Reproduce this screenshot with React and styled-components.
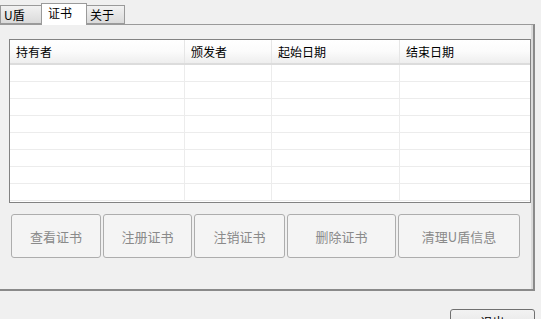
import React from "react";
import styled, { createGlobalStyle } from "styled-components";

const GlobalStyle = createGlobalStyle`
  html, body {
    margin: 0;
    padding: 0;
    background: #f0f0f0;
  }
  body {
    font-family: "Noto Sans CJK SC", "Liberation Sans", sans-serif;
    font-size: 12px;
  }
`;

const Window = styled.div`
  width: 541px;
  height: 319px;
  background: #f0f0f0;
  overflow: hidden;
  position: relative;
`;

const TabBar = styled.div`
  display: flex;
  align-items: flex-end;
  height: 24px;
`;

const Tab = styled.div`
  box-sizing: border-box;
  width: ${(p) => p.width}px;
  height: ${(p) => (p.active ? 22 : 19)}px;
  margin-bottom: ${(p) => (p.active ? -1 : 0)}px;
  padding-left: ${(p) => (p.active ? 6 : 3)}px;
  border: 1px solid #9a9a9a;
  border-bottom: ${(p) => (p.active ? "none" : "1px solid #9a9a9a")};
  background: ${(p) =>
    p.active ? "#ffffff" : "linear-gradient(#f2f2f2, #dadada)"};
  color: #000;
  font-size: 12px;
  line-height: 17px;
  position: relative;
  z-index: ${(p) => (p.active ? 2 : 1)};
  margin-right: -1px;
`;

const Pane = styled.div`
  box-sizing: border-box;
  width: 535px;
  height: 267px;
  border-top: 1px solid #9a9a9a;
  border-right: 2px solid #8a8a8a;
  border-bottom: 2px solid #8a8a8a;
  box-shadow: inset -2px 0 0 #dadada;
  padding: 14px 0 0 9px;
  display: flex;
  flex-direction: column;
`;

const ListBox = styled.div`
  box-sizing: border-box;
  width: 522px;
  height: 164px;
  border: 1px solid #828282;
  background: #fff;
  overflow: hidden;
`;

const Header = styled.div`
  display: flex;
  height: 25px;
  box-sizing: border-box;
  background: linear-gradient(#ffffff 0%, #fbfbfb 50%, #eeeeee 100%);
  border-bottom: 2px solid #dcdcdc;
`;

const HeadCell = styled.div`
  box-sizing: border-box;
  width: ${(p) => p.width}px;
  flex: ${(p) => (p.width ? "none" : 1)};
  padding-left: 6px;
  line-height: 23px;
  color: #000;
  border-right: ${(p) => (p.last ? "none" : "1px solid #e6e6e6")};
`;

const Row = styled.div`
  display: flex;
  height: 17px;
  box-sizing: border-box;
  border-bottom: 1px solid #ececec;
`;

const Cell = styled.div`
  box-sizing: border-box;
  width: ${(p) => p.width}px;
  flex: ${(p) => (p.width ? "none" : 1)};
  border-right: ${(p) => (p.last ? "none" : "1px solid #ececec")};
`;

const ButtonRow = styled.div`
  display: flex;
  gap: 2px;
  margin-top: 11px;
  margin-left: 2px;
`;

const ActionButton = styled.button`
  box-sizing: border-box;
  width: ${(p) => p.width}px;
  height: 44px;
  border: 1px solid #adadad;
  border-radius: 3px;
  background: #f4f4f4;
  color: #8a8a8a;
  font-family: "Noto Sans CJK SC", sans-serif;
  font-size: 13px;
  padding: 0;
`;

const Footer = styled.div`
  display: flex;
  justify-content: flex-end;
  padding: 18px 6px 0 0;
`;

const ExitButton = styled.button`
  box-sizing: border-box;
  width: 85px;
  height: 24px;
  border: 1px solid #707070;
  border-radius: 3px;
  background: linear-gradient(#f2f2f2, #e4e4e4);
  color: #000;
  font-family: "Noto Sans CJK SC", sans-serif;
  font-size: 12px;
  padding: 0;
`;

const columns = [
  { title: "持有者", width: 175 },
  { title: "颁发者", width: 87 },
  { title: "起始日期", width: 128 },
  { title: "结束日期" },
];

const buttons = [
  { label: "查看证书", width: 90 },
  { label: "注册证书", width: 89 },
  { label: "注销证书", width: 91 },
  { label: "删除证书", width: 109 },
  { label: "清理U盾信息", width: 122 },
];

const App = () => {
  return (
    <Window>
      <GlobalStyle />
      <TabBar>
        <Tab width={42}>U盾</Tab>
        <Tab width={46} active>
          证书
        </Tab>
        <Tab width={39}>关于</Tab>
      </TabBar>
      <Pane>
        <ListBox>
          <Header>
            {columns.map((c, i) => (
              <HeadCell key={c.title} width={c.width} last={i === 3}>
                {c.title}
              </HeadCell>
            ))}
          </Header>
          {Array.from({ length: 8 }).map((_, r) => (
            <Row key={r}>
              {columns.map((c, i) => (
                <Cell key={i} width={c.width} last={i === 3} />
              ))}
            </Row>
          ))}
        </ListBox>
        <ButtonRow>
          {buttons.map((b) => (
            <ActionButton key={b.label} width={b.width} disabled>
              {b.label}
            </ActionButton>
          ))}
        </ButtonRow>
      </Pane>
      <Footer>
        <ExitButton>退出</ExitButton>
      </Footer>
    </Window>
  );
};

export default App;
